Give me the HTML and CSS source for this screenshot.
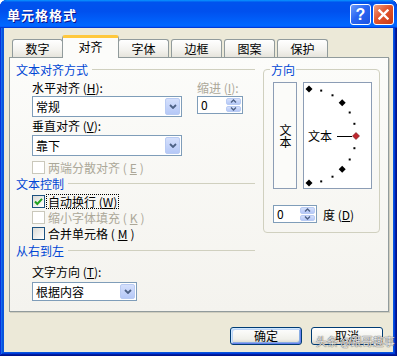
FILE: index.html
```html
<!DOCTYPE html>
<html lang="zh-CN">
<head>
    <meta charset="UTF-8">
    <title>单元格格式</title>
    <link rel="stylesheet" href="styles.css">
</head>
<body>
    <div class="window">
        <div class="titlebar">
            <span class="title">单元格格式</span>
            <div class="caption_btns">
                <span class="cbtn help">?</span>
                <span class="cbtn close">
                    <svg width="11" height="11" viewBox="0 0 11 11"><path d="M1.5 1.5 L9.5 9.5 M9.5 1.5 L1.5 9.5" stroke="#fff" stroke-width="2.4" stroke-linecap="square"/></svg>
                </span>
            </div>
        </div>

        <div class="client">
            <div class="tabs">
                <span class="tab">数字</span>
                <span class="tab active">对齐</span>
                <span class="tab">字体</span>
                <span class="tab">边框</span>
                <span class="tab">图案</span>
                <span class="tab">保护</span>
            </div>

            <div class="panel">
                <!-- 왼쪽 : 정렬 / 텍스트 제어 / 방향 -->
                <div class="left_col">
                    <div class="legend">文本对齐方式</div>
                    <div class="align_row">
                        <div class="align_main">
                            <div class="label">水平对齐 (<u>H</u>):</div>
                            <div class="select sel_h">
                                <span>常规</span>
                                <span class="arrow"><svg width="8" height="5" viewBox="0 0 8 5"><path d="M1 1 L4 4 L7 1" fill="none" stroke="#4d6185" stroke-width="1.8"/></svg></span>
                            </div>
                            <div class="label lbl_v">垂直对齐 (<u>V</u>):</div>
                            <div class="select sel_v">
                                <span>靠下</span>
                                <span class="arrow"><svg width="8" height="5" viewBox="0 0 8 5"><path d="M1 1 L4 4 L7 1" fill="none" stroke="#4d6185" stroke-width="1.8"/></svg></span>
                            </div>
                        </div>
                        <div class="indent">
                            <div class="label disabled">缩进 (<u>I</u>):</div>
                            <div class="spin spin_indent">
                                <span class="val">0</span>
                                <span class="spin_btns">
                                    <span class="sb"><svg width="7" height="4" viewBox="0 0 7 4"><path d="M1 3.5 L3.5 1 L6 3.5" fill="none" stroke="#4d6185" stroke-width="1.4"/></svg></span>
                                    <span class="sb"><svg width="7" height="4" viewBox="0 0 7 4"><path d="M1 0.5 L3.5 3 L6 0.5" fill="none" stroke="#4d6185" stroke-width="1.4"/></svg></span>
                                </span>
                            </div>
                        </div>
                    </div>
                    <div class="check sub disabled cb_dist"><span class="box"></span>两端分散对齐 (<u>E</u>)</div>

                    <div class="legend lg_ctrl">文本控制</div>
                    <div class="check sub cb_wrap">
                        <span class="box">
                            <svg width="11" height="11" viewBox="0 0 11 11"><path d="M2 5.5 L4.3 8 L9 2.8" fill="none" stroke="#21a121" stroke-width="2"/></svg>
                        </span>
                        <span class="focus">自动换行 (<u>W</u>)</span>
                    </div>
                    <div class="check sub disabled cb_shrink"><span class="box"></span>缩小字体填充 (<u>K</u>)</div>
                    <div class="check sub cb_merge"><span class="box"></span>合并单元格 (<u>M</u>)</div>

                    <div class="legend lg_rtl">从右到左</div>
                    <div class="label sub lbl_t">文字方向 (<u>T</u>):</div>
                    <div class="select sub sel_t">
                        <span>根据内容</span>
                        <span class="arrow"><svg width="8" height="5" viewBox="0 0 8 5"><path d="M1 1 L4 4 L7 1" fill="none" stroke="#4d6185" stroke-width="1.8"/></svg></span>
                    </div>
                </div>

                <!-- 오른쪽 : 방향 -->
                <fieldset class="dir">
                    <legend>方向</legend>
                    <div class="dir_row">
                        <div class="vbox"><span class="vtext">文本</span></div>
                        <div class="dial">
                            <svg width="67" height="105" viewBox="0 0 67 105">
                                <g fill="#000">
                                    <rect x="16.2" y="6.6" width="2" height="2"/>
                                    <rect x="27.5" y="11.3" width="2" height="2"/>
                                    <rect x="44.7" y="28.5" width="2" height="2"/>
                                    <rect x="49.4" y="39.8" width="2" height="2"/>
                                    <rect x="49.4" y="64.2" width="2" height="2"/>
                                    <rect x="44.7" y="75.5" width="2" height="2"/>
                                    <rect x="27.5" y="92.7" width="2" height="2"/>
                                    <rect x="16.2" y="97.4" width="2" height="2"/>
                                    <polygon points="5,2.5 8.5,6 5,9.5 1.5,6"/>
                                    <polygon points="38.2,16.3 41.7,19.8 38.2,23.3 34.7,19.8"/>
                                    <polygon points="38.2,82.7 41.7,86.2 38.2,89.7 34.7,86.2"/>
                                    <polygon points="5,96.5 8.5,100 5,103.5 1.5,100"/>
                                </g>
                                <text x="4" y="57.5" class="dial_text">文本</text>
                                <line x1="33" y1="53.5" x2="48" y2="53.5" stroke="#000" stroke-width="1"/>
                                <polygon points="52,49.5 55.5,53 52,56.5 48.5,53" fill="#c0272d" stroke="#6e1015" stroke-width="0.6"/>
                            </svg>
                        </div>
                    </div>
                    <div class="deg_row">
                        <div class="spin spin_deg">
                            <span class="val">0</span>
                            <span class="spin_btns">
                                <span class="sb"><svg width="7" height="4" viewBox="0 0 7 4"><path d="M1 3.5 L3.5 1 L6 3.5" fill="none" stroke="#4d6185" stroke-width="1.4"/></svg></span>
                                <span class="sb"><svg width="7" height="4" viewBox="0 0 7 4"><path d="M1 0.5 L3.5 3 L6 0.5" fill="none" stroke="#4d6185" stroke-width="1.4"/></svg></span>
                            </span>
                        </div>
                        <span>度 (<u>D</u>)</span>
                    </div>
                </fieldset>
            </div>

            <div class="actions">
                <button class="btn default">确定</button>
                <button class="btn">取消</button>
            </div>
        </div>

        <div class="watermark">头条 @跟哥趣事</div>
    </div>
</body>
</html>
```

FILE: styles.css
```css
* {
    margin: 0;
    padding: 0;
    box-sizing: border-box;
}

body {
    width: 397px;
    height: 356px;
    overflow: hidden;
    background: #fff;
    font-family: "Noto Sans CJK SC", "Noto Sans", sans-serif;
    font-size: 12px;
    color: #000;
}

u {
    text-decoration: underline;
}

.window {
    position: relative;
    width: 397px;
    height: 356px;
    display: flex;
    flex-direction: column;
    background: #0855dd;
    border-radius: 7px 7px 0 0;
    box-shadow: inset -1px -1px #00138c, inset 1px 1px #0831d9,
                inset -2px -2px #001ea0, inset 2px 2px #166aee,
                inset -3px -3px #003bda, inset 3px 3px #0855dd;
}

/* ---------- 타이틀바 ---------- */
.titlebar {
    height: 28px;
    display: flex;
    align-items: center;
    justify-content: space-between;
    padding: 0 3px 0 7px;
    border-radius: 7px 7px 0 0;
    background: linear-gradient(to bottom, #0997ff, #0053ee 8%, #0050ee 40%, #0066ff 88%, #0066ff 93%, #005bff 95%, #003dd7 96%, #003dd7);
}

.title {
    color: #fff;
    font-weight: bold;
    font-size: 13px;
    letter-spacing: 1px;
    text-shadow: 1px 1px #0f1089;
}

.caption_btns {
    display: flex;
    gap: 2px;
    margin-top: 1px;
}

.cbtn {
    width: 21px;
    height: 21px;
    border: 1px solid #fff;
    border-radius: 3px;
    display: flex;
    align-items: center;
    justify-content: center;
}

.help {
    background: linear-gradient(135deg, #6c9cfb, #2a66f2 45%, #1b52e0);
    color: #fff;
    font: bold 16px "Liberation Sans", sans-serif;
}

.close {
    background: linear-gradient(135deg, #f0a184, #e1552e 45%, #c83a17);
}

/* ---------- 본문 ---------- */
.client {
    flex: 1;
    margin: 0 4px 4px;
    background: #ece9d8;
    display: flex;
    flex-direction: column;
}

.tabs {
    display: flex;
    align-items: flex-end;
    height: 22px;
    margin: 7px 0 0 8px;
    gap: 2px;
}

.tab {
    width: 51px;
    height: 18px;
    border: 1px solid #919b9c;
    border-bottom: none;
    border-radius: 3px 3px 0 0;
    background: linear-gradient(#ffffff, #f3f2ee 60%, #e6e4dc);
    text-align: center;
    line-height: 17px;
}

.tab.active {
    position: relative;
    z-index: 1;
    width: 57px;
    height: 23px;
    margin: 0 -3px -1px;
    border-top: 3px solid #ffc83c;
    background: #fcfcfa;
    line-height: 18px;
}

.panel {
    width: 380px;
    height: 255px;
    margin-left: 5px;
    border: 1px solid #919b9c;
    background: linear-gradient(#fcfcfa, #f4f3ee);
    box-shadow: 1px 1px #d0cebf;
    padding: 5px 0 0 6px;
    display: flex;
}

.left_col {
    width: 239px;
}

.legend {
    display: flex;
    align-items: center;
    gap: 4px;
    height: 13px;
    line-height: 13px;
    color: #0046d5;
}

.legend::after {
    content: "";
    flex: 1;
    height: 1px;
    background: #d0d0bf;
}

.label {
    height: 13px;
    line-height: 13px;
}

.disabled {
    color: #aca899;
}

.sub {
    margin-left: 16px;
}

.align_row {
    display: flex;
    margin: 5px 0 0 16px;
}

.align_main {
    width: 150px;
}

.indent {
    margin-left: 15px;
}

.select {
    height: 21px;
    border: 1px solid #7f9db9;
    background: #fff;
    display: flex;
    align-items: center;
    justify-content: space-between;
    padding-left: 3px;
}

.select .arrow {
    width: 15px;
    height: 17px;
    margin-right: 1px;
    border: 1px solid #b9cbf3;
    border-radius: 2px;
    background: linear-gradient(#d5e0fc, #b5c8f7);
    display: flex;
    align-items: center;
    justify-content: center;
}

.sel_h {
    margin-top: 2px;
}

.lbl_v {
    margin-top: 2px;
}

.sel_v {
    margin-top: 3px;
}

.sel_t {
    width: 105px;
    height: 19px;
    margin-top: 4px;
}

.sel_t .arrow {
    height: 15px;
}

.spin {
    height: 18px;
    border: 1px solid #7f9db9;
    background: #fff;
    display: flex;
}

.spin_indent {
    width: 46px;
    margin-top: 2px;
}

.spin .val {
    flex: 1;
    padding-left: 3px;
    line-height: 16px;
}

.spin_btns {
    width: 16px;
    display: flex;
    flex-direction: column;
    gap: 1px;
    padding: 1px 1px 1px 0;
}

.sb {
    flex: 1;
    border: 1px solid #b9cbf3;
    border-radius: 2px;
    background: linear-gradient(#d5e0fc, #b5c8f7);
    display: flex;
    align-items: center;
    justify-content: center;
}

.check {
    display: flex;
    align-items: center;
    gap: 3px;
    height: 13px;
    line-height: 13px;
}

.box {
    width: 13px;
    height: 13px;
    flex: none;
    border: 1px solid #1c5180;
    background: linear-gradient(135deg, #dcdcd7, #ffffff);
    display: flex;
    align-items: center;
    justify-content: center;
}

.check.disabled .box {
    border-color: #cac8bb;
    background: #fff;
}

.focus {
    border: 1px dotted #000;
    padding: 0 1px;
    line-height: 13px;
    margin-left: -2px;
}

.cb_dist {
    margin-top: 5px;
}

.lg_ctrl {
    margin-top: 3px;
}

.cb_wrap {
    margin-top: 5px;
}

.cb_shrink,
.cb_merge {
    margin-top: 3px;
}

.lg_rtl {
    margin-top: 4px;
}

.lbl_t {
    margin-top: 8px;
}

/* ---------- 방향 ---------- */
.dir {
    width: 117px;
    height: 170px;
    margin-left: 8px;
    border: 1px solid #d0d0bf;
    border-radius: 4px;
    padding: 0 0 0 9px;
}

.dir legend {
    margin-left: -3px;
    padding: 0 1px;
    line-height: 13px;
    color: #0046d5;
}

.dir_row {
    display: flex;
    gap: 6px;
    margin-top: 6px;
}

.vbox {
    width: 24px;
    height: 107px;
    border: 1px solid #8c9db5;
    background: #fbfbf9;
    display: flex;
    align-items: center;
    justify-content: center;
}

.vtext {
    writing-mode: vertical-rl;
    text-orientation: upright;
    line-height: 12px;
}

.dial {
    width: 69px;
    height: 107px;
    border: 1px solid #8c9db5;
    background: #fff;
}

.dial svg {
    display: block;
}

.dial_text {
    font-family: "Noto Sans CJK SC", sans-serif;
    font-size: 12px;
}

.deg_row {
    display: flex;
    align-items: center;
    gap: 6px;
    margin-top: 16px;
}

.spin_deg {
    width: 44px;
}

/* ---------- 버튼 ---------- */
.actions {
    display: flex;
    justify-content: flex-end;
    gap: 9px;
    margin: 15px 10px 0 0;
}

.btn {
    width: 72px;
    height: 18px;
    border: 1px solid #003c74;
    border-radius: 3px;
    background: linear-gradient(#ffffff, #f0f0ea 70%, #d6d0c5);
    font-family: "Noto Sans CJK SC", sans-serif;
    font-size: 12px;
    line-height: 14px;
    color: #000;
}

.btn.default {
    box-shadow: inset 1px 1px #cee7ff, inset -1px -1px #6982ee,
                inset 2px 2px #bcd4f6, inset -2px -2px #89ade4;
}

.watermark {
    position: absolute;
    left: 316px;
    top: 333px;
    font-size: 11px;
    color: rgba(255, 255, 255, 0.85);
    text-shadow: 0 0 1px #555, 0 0 1px #555;
}
```
